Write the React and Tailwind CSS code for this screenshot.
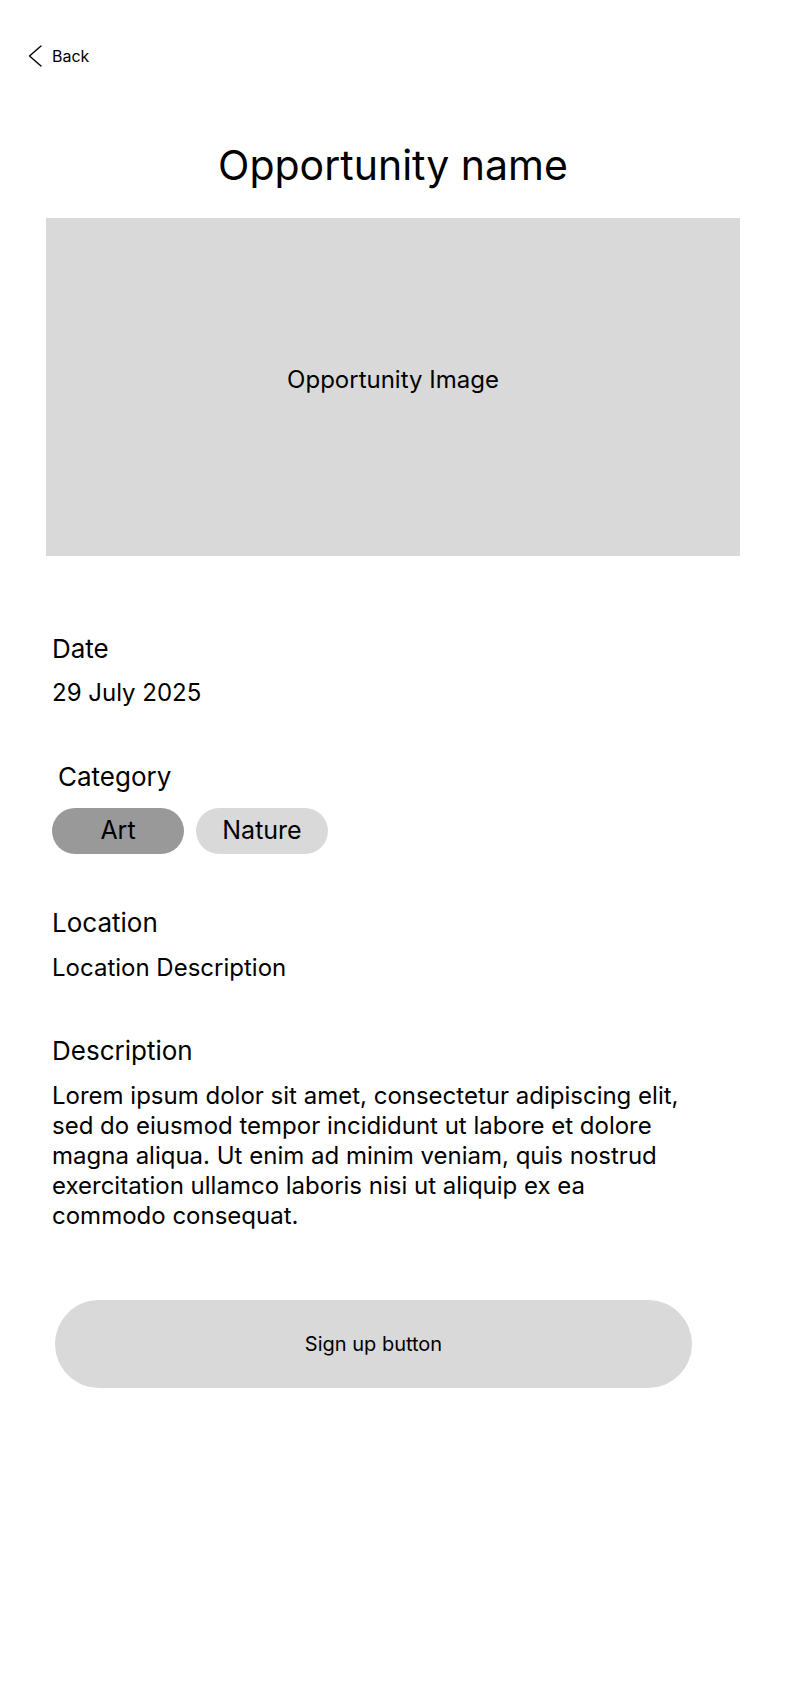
import React from "react";

// Detail page for a single opportunity (wireframe style)
const categories = [
  { label: "Art", active: true },
  { label: "Nature", active: false },
];

const description =
  "Lorem ipsum dolor sit amet, consectetur adipiscing elit, sed do eiusmod tempor incididunt ut labore et dolore magna aliqua. Ut enim ad minim veniam, quis nostrud exercitation ullamco laboris nisi ut aliquip ex ea commodo consequat.";

const ChevronLeft = () => (
  <svg width="14" height="22" viewBox="0 0 14 22" fill="none">
    <path d="M13 1L1.5 11L13 21" stroke="#000" strokeWidth="1.4" strokeLinecap="round" strokeLinejoin="round" />
  </svg>
);

export default function App() {
  return (
    <div className="min-h-screen w-full bg-white text-black font-['Inter',sans-serif]">
      {/* Back link */}
      <div className="pt-[45px] pl-[28px]">
        <button className="flex items-center gap-[10px] h-[22px]">
          <ChevronLeft />
          <span className="text-[16px] leading-[22px]">Back</span>
        </button>
      </div>

      {/* Title */}
      <h1 className="mt-[74px] text-center text-[41px] leading-[48px] font-normal">
        Opportunity name
      </h1>

      {/* Image placeholder */}
      <div className="mt-[29px] mx-[46px] h-[338px] bg-[#d9d9d9] flex items-center justify-center pb-[14px]">
        <span className="text-[24px] leading-[32px]">Opportunity Image</span>
      </div>

      <div className="pl-[52px]">
        {/* Date */}
        <div className="mt-[77px] text-[26px] leading-[32px]">Date</div>
        <div className="mt-[12px] text-[24px] leading-[32px]">29 July 2025</div>

        {/* Category */}
        <div className="mt-[52px] pl-[6px] text-[26px] leading-[32px]">Category</div>
        <div className="mt-[15px] flex gap-[12px]">
          {categories.map((c) => (
            <span
              key={c.label}
              className={`w-[132px] h-[46px] rounded-full flex items-center justify-center text-[25px] ${
                c.active ? "bg-[#999999]" : "bg-[#d9d9d9]"
              }`}
            >
              {c.label}
            </span>
          ))}
        </div>

        {/* Location */}
        <div className="mt-[53px] text-[26px] leading-[32px]">Location</div>
        <div className="mt-[13px] text-[24px] leading-[32px]">Location Description</div>

        {/* Description */}
        <div className="mt-[51px] text-[26px] leading-[32px]">Description</div>
        <p className="mt-[14px] w-[636px] text-[24px] leading-[30px]">{description}</p>
      </div>

      {/* Sign up */}
      <div className="mt-[69px] pl-[55px] pb-[316px]">
        <button className="w-[637px] h-[88px] rounded-full bg-[#d9d9d9] flex items-center justify-center text-[20px]">
          Sign up button
        </button>
      </div>
    </div>
  );
}
